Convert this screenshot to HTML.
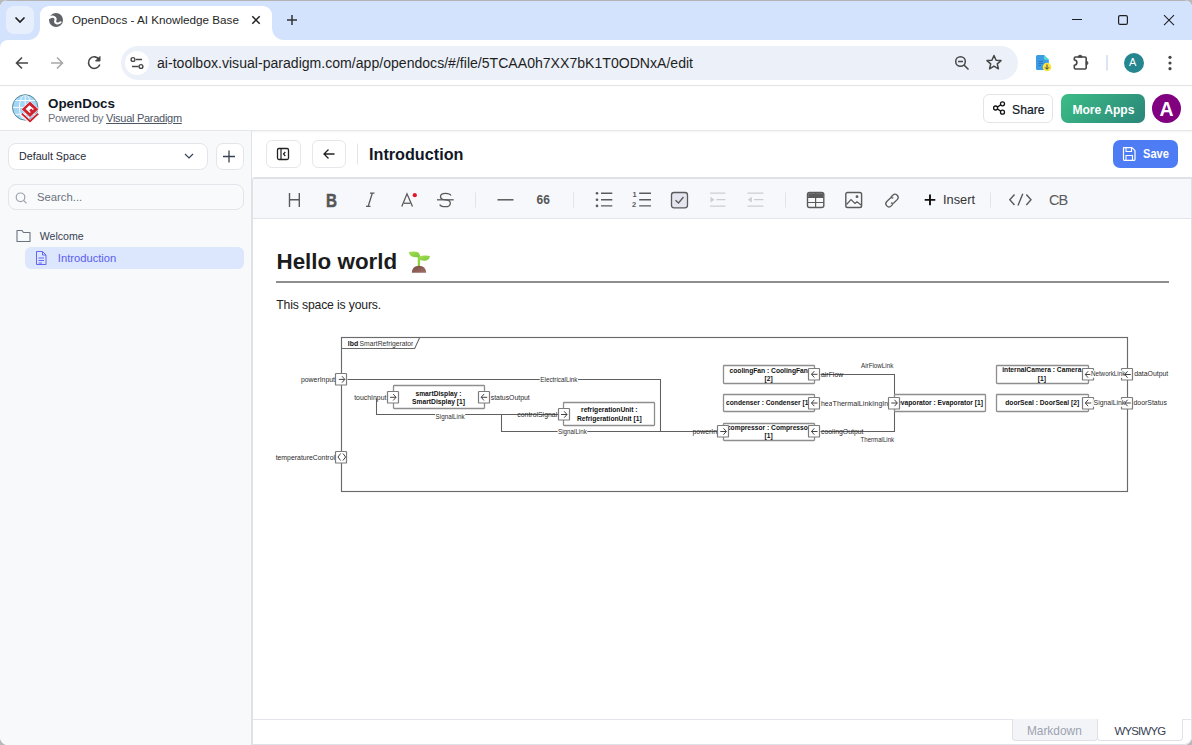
<!DOCTYPE html>
<html><head><meta charset="utf-8">
<style>
*{box-sizing:border-box;margin:0;padding:0}
html,body{width:1192px;height:745px;overflow:hidden;background:#b9b9b9;font-family:"Liberation Sans",sans-serif}
.abs{position:absolute}
#win{position:absolute;left:0;top:0;width:1192px;height:745px;background:#fff;border-radius:8px 8px 8px 8px;overflow:hidden}
#tabstrip{position:absolute;left:0;top:0;width:1192px;height:40px;background:#d3e3fd}
#toolbar{position:absolute;left:0;top:40px;width:1192px;height:46px;background:#fff;border-bottom:1px solid #e3e3e3}
.t{position:absolute;white-space:nowrap;line-height:1}
svg{position:absolute;overflow:visible}
</style></head>
<body>
<div id="win">
  <div id="tabstrip">
    <div class="abs" style="left:0;top:0;width:1192px;height:1px;background:#b4b4b4"></div>
    <div class="abs" style="left:28px;top:28px;width:256px;height:12px;background:#fff"></div>
    <div class="abs" style="left:16px;top:16px;width:24px;height:24px;background:#d3e3fd;border-radius:0 0 12px 0"></div>
    <div class="abs" style="left:272px;top:16px;width:24px;height:24px;background:#d3e3fd;border-radius:0 0 0 12px"></div>
    <div class="abs" style="left:40px;top:6px;width:232px;height:34px;background:#fff;border-radius:9px 9px 0 0"></div>
    <div class="abs" style="left:6px;top:6px;width:28px;height:28px;border-radius:8px;background:#e8effc"></div>
    <svg style="left:0;top:0" width="40" height="40"><path d="M15.5 17.5 L20 22 L24.5 17.5" fill="none" stroke="#1f1f1f" stroke-width="1.7"/></svg>
    <svg style="left:0;top:0" width="300" height="40">
      <circle cx="56" cy="20" r="7" fill="#5f6368"/>
      <path d="M49.8 17.8 Q52 15.8 54.3 17.2 Q56.3 18.6 55.3 20.6 Q54.5 22.4 56.5 23.2 Q58.5 24 60.5 22.3" fill="none" stroke="#fff" stroke-width="2.1" stroke-linecap="round"/>
      <path d="M252.3 16.3 L259.7 23.7 M259.7 16.3 L252.3 23.7" stroke="#1f1f1f" stroke-width="1.5"/>
      <path d="M287 20 H297 M292 15 V25" stroke="#333" stroke-width="1.5"/>
    </svg>
    <div class="t" style="left:72px;top:14px;font-size:11.7px;color:#1f1f1f">OpenDocs - AI Knowledge Base</div>
    <svg style="left:0;top:0" width="1192" height="40">
      <path d="M1072 19.5 H1082" stroke="#1f1f1f" stroke-width="1.1"/>
      <rect x="1118.6" y="15.6" width="8.8" height="8.8" rx="1.5" fill="none" stroke="#1f1f1f" stroke-width="1.2"/>
      <path d="M1164 15.2 L1174 25.2 M1174 15.2 L1164 25.2" stroke="#1f1f1f" stroke-width="1.05"/>
    </svg>
  </div>
  <div id="toolbar">
    <div class="abs" style="left:0;top:0;width:8px;height:8px;background:#d3e3fd"></div>
    <div class="abs" style="left:0;top:0;width:16px;height:16px;background:#fff;border-radius:8px 0 0 0"></div>
    <svg style="left:0;top:0" width="1192" height="46">
      <path d="M28 23 H16.5 M22 17.5 L16.5 23 L22 28.5" fill="none" stroke="#474747" stroke-width="1.6"/>
      <path d="M51 23 H62.5 M57 17.5 L62.5 23 L57 28.5" fill="none" stroke="#a8a8a8" stroke-width="1.6"/>
      <path d="M99.2 19.5 A5.8 5.8 0 1 0 99.8 24.5" fill="none" stroke="#474747" stroke-width="1.6"/>
      <path d="M100 16.5 V21 H95.5 Z" fill="#474747" stroke="#474747" stroke-width="1"/>
    </svg>
    <div class="abs" style="left:121px;top:6px;width:897px;height:34px;background:#ecf1f9;border-radius:17px"></div>
    <div class="abs" style="left:125px;top:11px;width:24px;height:24px;background:#fff;border-radius:12px"></div>
    <svg style="left:0;top:0" width="1192" height="46">
      <circle cx="133" cy="19.5" r="1.9" fill="none" stroke="#474747" stroke-width="1.4"/>
      <path d="M136 19.5 H142" stroke="#474747" stroke-width="1.4"/>
      <circle cx="141" cy="26.5" r="1.9" fill="none" stroke="#474747" stroke-width="1.4"/>
      <path d="M132 26.5 H138.5" stroke="#474747" stroke-width="1.4"/>
      <circle cx="960.5" cy="21.5" r="4.8" fill="none" stroke="#474747" stroke-width="1.5"/>
      <path d="M958 21.5 H963 M964 25 L968.5 29.5" stroke="#474747" stroke-width="1.5"/>
      <path d="M994 15.5 L996.1 20.2 L1001 20.6 L997.3 23.9 L998.4 28.8 L994 26.2 L989.6 28.8 L990.7 23.9 L987 20.6 L991.9 20.2 Z" fill="none" stroke="#474747" stroke-width="1.5" stroke-linejoin="round"/>
      <path d="M1037.5 15 H1044 L1048.8 19.8 V28.5 Q1048.8 30 1047.3 30 H1037.5 Q1036 30 1036 28.5 V16.5 Q1036 15 1037.5 15Z" fill="#3c9be6"/>
      <path d="M1044 15 L1048.8 19.8 H1045.2 Q1044 19.8 1044 18.6Z" fill="#4de0c6"/>
      <path d="M1038.5 21.5 H1043 M1038.5 23.5 H1043 M1038.5 25.5 H1041" stroke="#2a6fb5" stroke-width="0.9"/>
      <circle cx="1047" cy="27" r="4.3" fill="#fce43f"/>
      <path d="M1047 24.5 V29 M1045 27.3 L1047 29.3 L1049 27.3" fill="none" stroke="#3c4043" stroke-width="1"/>
      <path d="M1075.5 17 H1085 Q1086.2 17 1086.2 18.2 V27.8 Q1086.2 29 1085 29 H1075.5 Q1074.3 29 1074.3 27.8 V25.2 A2.6 2.6 0 0 0 1074.3 20 V18.2 Q1074.3 17 1075.5 17Z" fill="none" stroke="#474747" stroke-width="1.6" stroke-linejoin="round"/>
      <path d="M1078 17.2 A2.1 2.1 0 0 1 1082.2 17.2 Z" fill="#474747" stroke="#474747" stroke-width="0.6"/>
      <path d="M1086.2 21.2 A1.8 1.8 0 0 1 1086.2 24.8 Z" fill="#474747" stroke="#474747" stroke-width="0.8"/>
      <path d="M1107 15 V30.5" stroke="#c2d4f4" stroke-width="1.2"/>
      <circle cx="1134" cy="23" r="10" fill="#26868f"/>
      <circle cx="1170" cy="17.3" r="1.6" fill="#474747"/>
      <circle cx="1170" cy="23" r="1.6" fill="#474747"/>
      <circle cx="1170" cy="28.7" r="1.6" fill="#474747"/>
    </svg>
    <div class="t" style="left:1129px;top:17px;font-size:11px;color:#fff">A</div>
    <div class="t" style="left:157px;top:16px;font-size:14.08px;color:#1f1f1f">ai-toolbox.visual-paradigm.com/app/opendocs/#/file/5TCAA0h7XX7bK1T0ODNxA/edit</div>
  </div>
  <!-- app header -->
  <div class="abs" style="left:0;top:86px;width:1192px;height:45px;background:#fff;border-bottom:1px solid #e6e7eb;box-shadow:0 1px 2px rgba(0,0,0,0.05)"></div>
  <svg style="left:0;top:86px" width="60" height="45">
    <defs><clipPath id="gclip"><circle cx="25.2" cy="21.4" r="12.2"/></clipPath></defs>
    <circle cx="25.2" cy="21.4" r="12.7" fill="#a3d6f4" stroke="#5a8796" stroke-width="1"/>
    <g clip-path="url(#gclip)" stroke="#fff" stroke-width="1" fill="none" opacity="0.9">
      <path d="M12 14.5 H38 M12 21.4 H38 M12 28.3 H38"/>
      <ellipse cx="25.2" cy="21.4" rx="5.8" ry="12.5"/>
      <path d="M25.2 9 V34"/>
    </g>
    <path d="M21.5 27.8 L30 35.6 L38.5 27.8" fill="none" stroke="#fff" stroke-width="3.2"/>
    <path d="M21.8 27.6 L30 35.2 L38.2 27.6" fill="none" stroke="#d0212e" stroke-width="1.9"/>
    <path d="M30 15.2 L38.6 23.3 L30 31.4 L21.4 23.3 Z" fill="#d0212e" stroke="#fff" stroke-width="0.6"/>
    <path d="M29.4 19.2 L33.9 23.1 L29.9 26.9 L25.6 22.9 Z" fill="#fff"/>
    <path d="M31.2 22.6 L33.2 24.5 L31.2 26.4 L29.2 24.5 Z" fill="#d0212e"/>
  </svg>
  <div class="t" style="left:48px;top:96.5px;font-size:13.4px;font-weight:bold;color:#111827">OpenDocs</div>
  <div class="t" style="left:48px;top:112.6px;font-size:11px;letter-spacing:-0.28px;color:#6b7280">Powered by <span style="text-decoration:underline;color:#4b5563">Visual Paradigm</span></div>
  <div class="abs" style="left:982.5px;top:94px;width:70px;height:28.5px;border:1px solid #e3e4e8;border-radius:6px;background:#fff"></div>
  <svg style="left:0;top:0" width="1192" height="130">
    <circle cx="1002.5" cy="103.8" r="2" fill="none" stroke="#111" stroke-width="1.3"/>
    <circle cx="995.6" cy="108" r="2" fill="none" stroke="#111" stroke-width="1.3"/>
    <circle cx="1002.5" cy="112.2" r="2" fill="none" stroke="#111" stroke-width="1.3"/>
    <path d="M997.4 107 L1000.7 104.9 M997.4 109 L1000.7 111.1" stroke="#111" stroke-width="1.3"/>
  </svg>
  <div class="t" style="left:1012px;top:104px;font-size:12.2px;color:#111827;-webkit-text-stroke:0.2px #111827">Share</div>
  <div class="abs" style="left:1061px;top:94px;width:84px;height:28.5px;border-radius:7px;background:linear-gradient(135deg,#3cbd86,#2a8679)"></div>
  <div class="t" style="left:1072.4px;top:104px;font-size:12.1px;font-weight:bold;color:#fff">More Apps</div>
  <div class="abs" style="left:1152px;top:94px;width:29px;height:29px;border-radius:50%;background:#800080"></div>
  <div class="t" style="left:1159.5px;top:100px;font-size:19.5px;font-weight:bold;color:#fff">A</div>
  <!-- sidebar -->
  <div class="abs" style="left:0;top:131px;width:252px;height:614px;background:#f8f9fb;border-right:1px solid #e0e2e8"></div>
  <div class="abs" style="left:7.5px;top:143px;width:200px;height:27px;background:#fff;border:1px solid #e3e5ea;border-radius:8px"></div>
  <div class="t" style="left:19px;top:151px;font-size:10.7px;color:#1f2937">Default Space</div>
  <div class="abs" style="left:215.5px;top:143px;width:28px;height:27px;background:#fff;border:1px solid #e3e5ea;border-radius:7px"></div>
  <div class="abs" style="left:7.5px;top:184px;width:236px;height:26px;background:#f9fafb;border:1px solid #e3e5ea;border-radius:8px"></div>
  <div class="t" style="left:37px;top:192px;font-size:11.3px;color:#6b7280">Search...</div>
  <svg style="left:0;top:0" width="252" height="280">
    <path d="M185 154 L189 158 L193 154" fill="none" stroke="#374151" stroke-width="1.2"/>
    <path d="M229 150.5 V162.5 M223 156.5 H235" stroke="#374151" stroke-width="1.3"/>
    <circle cx="20.5" cy="197.3" r="4.3" fill="none" stroke="#9ca3af" stroke-width="1.2"/>
    <path d="M23.6 200.4 L26.5 203.3" stroke="#9ca3af" stroke-width="1.2"/>
    <path d="M17 230.5 H22 L23.5 232.5 H30 V241.5 H17 Z" fill="none" stroke="#6b7280" stroke-width="1.1" stroke-linejoin="round"/>
  </svg>
  <div class="t" style="left:39.7px;top:231px;font-size:10.6px;color:#374151">Welcome</div>
  <div class="abs" style="left:25px;top:247px;width:219px;height:22px;background:#dce6fd;border-radius:6px"></div>
  <svg style="left:0;top:0" width="252" height="280">
    <path d="M36.5 251.5 H42.5 L46 255 V264.5 H36.5 Z M42.5 251.5 V255 H46 M38.5 258 H44 M38.5 260.5 H44 M38.5 263 H42" fill="none" stroke="#6366f1" stroke-width="1" stroke-linejoin="round"/>
  </svg>
  <div class="t" style="left:57.8px;top:252.5px;font-size:11.2px;color:#5b5ff0">Introduction</div>
  <!-- editor -->
  <div class="abs" style="left:266px;top:140px;width:35px;height:28px;border:1px solid #e6e7ea;border-radius:6px;background:#fff"></div>
  <div class="abs" style="left:312px;top:140px;width:34px;height:28px;border:1px solid #e6e7ea;border-radius:6px;background:#fff"></div>
  <svg style="left:0;top:0" width="1192" height="230">
    <rect x="277.5" y="148.5" width="11" height="11" rx="1.5" fill="none" stroke="#222" stroke-width="1.3"/>
    <path d="M281 148.5 V159.5 M285.3 152 L283.5 154 L285.3 156" fill="none" stroke="#222" stroke-width="1.2"/>
    <path d="M334.5 154 H324 M328.5 149.5 L324 154 L328.5 158.5" fill="none" stroke="#222" stroke-width="1.3"/>
    <path d="M357.5 143.5 V164.5" stroke="#e2e4e8" stroke-width="1"/>
  </svg>
  <div class="t" style="left:369px;top:146px;font-size:16.2px;font-weight:bold;color:#111827">Introduction</div>
  <div class="abs" style="left:1113px;top:140px;width:65px;height:27.5px;border-radius:7px;background:#4e7cf5"></div>
  <svg style="left:0;top:0" width="1192" height="230">
    <path d="M1123.5 147.7 H1132 L1135 150.7 V159.5 Q1135 160.3 1134.2 160.3 H1124.3 Q1123.5 160.3 1123.5 159.5 Z" fill="none" stroke="#fff" stroke-width="1.2" stroke-linejoin="round"/>
    <path d="M1126 147.7 V151.5 H1131.5 V147.7 M1126 160.3 V155.5 H1132.5 V160.3" fill="none" stroke="#fff" stroke-width="1.1"/>
  </svg>
  <div class="t" style="left:1142.5px;top:148px;font-size:12.8px;font-weight:bold;color:#fff;transform:scaleX(0.87);transform-origin:0 0">Save</div>
  <div class="abs" style="left:252px;top:177px;width:940px;height:568px;border:1px solid #dfe1e7;border-top:2px solid #dfe1e7;border-radius:3px 0 8px 0;background:#fff"></div>
  <div class="abs" style="left:253px;top:179px;width:938px;height:40px;background:#f7f8fb;border-bottom:1px solid #e3e5ea"></div>
  <!-- toolbar icons -->
  <svg style="left:0;top:0" width="1192" height="230">
    <g stroke="#5a5a5a" fill="none" stroke-width="1.4">
      <path d="M289.5 193 V207 M299.3 193 V207 M289.5 199.8 H299.3"/>
      <path d="M366 206.3 H370.5 M370 193.2 H374.5 M372.3 193.2 L368.2 206.3" stroke-width="1.3"/>
      <path d="M401.8 206.5 L407 193.8 L412.5 206.5" stroke-width="1.3"/>
      <path d="M437 199.8 H453.7" stroke-width="1.3"/>
      <path d="M451 195.5 Q450 193.3 445.5 193.3 Q440.5 193.3 440.5 196.6 Q440.5 199.8 445.5 199.8 Q450.3 199.8 450.3 203.2 Q450.3 206.7 445.3 206.7 Q440.5 206.7 439.8 204.5" stroke-width="1.3"/>
      <path d="M497.5 199.8 H513.5" stroke-width="1.5"/>
      <path d="M601 193.3 H612.3 M601 199.7 H612.3 M601 205.9 H612.3" stroke-width="1.4"/>
      <path d="M639.2 193.3 H651 M639.2 199.7 H651 M639.2 205.9 H651" stroke-width="1.4"/>
      <rect x="671.5" y="192.5" width="16" height="15.3" rx="2.5" fill="#e3e6ef" stroke-width="1.3"/>
      <path d="M675.5 200.2 L678.5 203 L683.5 197" stroke-width="1.3"/>
      <g stroke="#cbcdd2"><path d="M710 193.2 H725.5 M710 206.2 H725.5 M716.5 199.7 H725.5" stroke-width="1.3"/></g>
      <g stroke="#cbcdd2"><path d="M747.5 193.2 H763.5 M747.5 206.2 H763.5 M754 199.7 H763.5" stroke-width="1.3"/></g>
      <rect x="807.5" y="192.5" width="16.3" height="15" rx="2" stroke-width="1.4"/>
      <path d="M807.5 197.5 H823.8 M815.6 192.5 V207.5 M807.5 202.5 H823.8" stroke-width="1.2"/>
      <rect x="845.8" y="192.5" width="15.8" height="15" rx="1.8" stroke-width="1.4"/>
      <path d="M846.5 204.5 L851 199.5 L855 203.5 L857 201.7 L861 205" stroke-width="1.2"/>
      <path d="M890.8 197.2 L892.8 195.2 Q895 193 897.2 195.2 Q899.4 197.4 897.2 199.6 L894.3 202.5 Q892.6 204 891 202.7 M893.3 198.3 Q891.6 197 889.9 198.5 L886.8 201.5 Q884.6 203.7 886.8 205.9 Q889 208.1 891.2 205.9 L893 204.1" stroke-width="1.3"/>
      <path d="M1014.5 194.5 L1009.8 199.8 L1014.5 205 M1026.3 194.5 L1031 199.8 L1026.3 205 M1022.8 193.8 L1018 205.6" stroke-width="1.4"/>
    </g>
    <rect x="327.5" y="193" width="10.5" height="14" fill="none"/>
    <g fill="#5a5a5a">
      <path d="M404 202.6 H410.5 V203.9 H404Z"/>
      <circle cx="597" cy="193.3" r="1.3"/><circle cx="597" cy="199.7" r="1.3"/><circle cx="597" cy="205.9" r="1.3"/>
    </g>
    <g fill="#cbcdd2">
      <path d="M710.5 196.8 L714.5 199.7 L710.5 202.6Z"/>
      <path d="M751.8 196.8 L747.8 199.7 L751.8 202.6Z"/>
    </g>
    <path d="M808.2 193.2 H823 V197.5 H808.2Z" fill="#5a5a5a"/>
    <circle cx="857" cy="196.7" r="1.4" fill="#5a5a5a"/>
    <circle cx="414.8" cy="195.2" r="2.1" fill="#e5142a"/>
    <path d="M930 194.6 V205.2 M924.7 199.9 H935.3" stroke="#111" stroke-width="1.9"/>
    <path d="M573.5 192.5 V207.5 M785.5 192.5 V207.5 M990.5 192.5 V207.5 M475.5 192.5 V207.5" stroke="#e2e4e9" stroke-width="1"/>
  </svg>
  <div class="t" style="left:326.3px;top:190.7px;font-size:19px;font-weight:bold;color:#555;transform:scaleX(0.8);transform-origin:0 0;-webkit-text-stroke:0.5px #555">B</div>
  <div class="t" style="left:536.5px;top:194.2px;font-size:12px;font-weight:bold;color:#555">66</div>
  <div class="t" style="left:632.5px;top:191px;font-size:7.5px;font-weight:bold;color:#5a5a5a">1</div>
  <div class="t" style="left:632px;top:201px;font-size:7.5px;font-weight:bold;color:#5a5a5a">2</div>
  <div class="t" style="left:943px;top:193.5px;font-size:12.8px;color:#333">Insert</div>
  <div class="t" style="left:1049px;top:192.5px;font-size:14.5px;color:#5a5a5a;letter-spacing:-1px">CB</div>
  <!-- content -->
  <div class="t" style="left:276.5px;top:251px;font-size:22.4px;font-weight:bold;color:#1c1c1c">Hello world</div>
  <svg style="left:0;top:0" width="1192" height="300">
    <defs>
      <linearGradient id="leaf" x1="0" y1="0" x2="1" y2="1"><stop offset="0" stop-color="#a9e052"/><stop offset="1" stop-color="#79c73c"/></linearGradient>
      <linearGradient id="soil" x1="0" y1="0" x2="1" y2="1"><stop offset="0" stop-color="#7a4a45"/><stop offset="1" stop-color="#a0706a"/></linearGradient>
    </defs>
    <path d="M418.9 256.5 V266.5" stroke="#8fd443" stroke-width="2.3"/>
    <path d="M408.8 252 Q413 250.8 417.5 252 Q420.5 253.5 419.8 257 Q414 257.8 411 256 Q409 254.5 408.8 252Z" fill="url(#leaf)"/>
    <path d="M418.3 258.5 Q419.5 255.5 424 255.5 Q428.5 255.3 430 256.2 Q429.5 259.5 426.5 260.5 Q421 261.5 418.3 258.5Z" fill="url(#leaf)"/>
    <path d="M411.8 272.8 Q412.2 266 419 265.8 Q425.8 266 426.2 272.8Z" fill="url(#soil)"/>
    <rect x="276" y="281" width="893" height="2" fill="#8e8e8e"/>
  </svg>
  <div class="t" style="left:276.3px;top:299px;font-size:12.2px;color:#222;letter-spacing:-0.15px">This space is yours.</div>
  <!-- diagram -->
  <svg style="left:0;top:0" width="1192" height="745" font-family="Liberation Sans, sans-serif">
    <rect x="341.5" y="337.5" width="786" height="154" fill="#fff" stroke="#6a6a6a" stroke-width="1.15"/>
    <path d="M341.5 348.5 H414.7 L419.7 337.5" fill="none" stroke="#6a6a6a" stroke-width="1.1"/>
    <path d="M347.5 379.5 L660.5 379.5 L660.5 431.5 L717.5 431.5" fill="none" stroke="#606060" stroke-width="1.05"/>
    <path d="M376.5 398.5 L376.5 414.5 L558.5 414.5" fill="none" stroke="#606060" stroke-width="1.05"/>
    <path d="M501.5 414.5 L501.5 431.5 L660.5 431.5" fill="none" stroke="#606060" stroke-width="1.05"/>
    <path d="M820.5 374.5 L894.5 374.5 L894.5 431.5 L820.5 431.5" fill="none" stroke="#606060" stroke-width="1.05"/>
    <rect x="393.5" y="385.5" width="91.0" height="23.0" rx="0.8" fill="#fff" stroke="#8e8e8e" stroke-width="1.3"/>
    <rect x="563.5" y="402.5" width="91.0" height="23.0" rx="0.8" fill="#fff" stroke="#8e8e8e" stroke-width="1.3"/>
    <rect x="723.5" y="365.5" width="91.0" height="18.0" rx="0.8" fill="#fff" stroke="#8e8e8e" stroke-width="1.3"/>
    <rect x="723.5" y="394.5" width="91.0" height="17.0" rx="0.8" fill="#fff" stroke="#8e8e8e" stroke-width="1.3"/>
    <rect x="723.5" y="423.5" width="91.0" height="17.0" rx="0.8" fill="#fff" stroke="#8e8e8e" stroke-width="1.3"/>
    <rect x="894.5" y="394.5" width="91.0" height="17.0" rx="0.8" fill="#fff" stroke="#8e8e8e" stroke-width="1.3"/>
    <rect x="996.5" y="365.5" width="92.0" height="18.0" rx="0.8" fill="#fff" stroke="#8e8e8e" stroke-width="1.3"/>
    <rect x="996.5" y="394.5" width="92.0" height="17.0" rx="0.8" fill="#fff" stroke="#8e8e8e" stroke-width="1.3"/>
    <text x="438.5" y="393.2" font-size="6.7" text-anchor="middle" font-weight="bold" fill="#111" dominant-baseline="central">smartDisplay :</text>
    <text x="438.5" y="401.6" font-size="6.7" text-anchor="middle" font-weight="bold" fill="#111" dominant-baseline="central">SmartDisplay [1]</text>
    <text x="609.3" y="409.9" font-size="6.7" text-anchor="middle" font-weight="bold" fill="#111" dominant-baseline="central">refrigerationUnit :</text>
    <text x="609.3" y="418.7" font-size="6.7" text-anchor="middle" font-weight="bold" fill="#111" dominant-baseline="central">RefrigerationUnit [1]</text>
    <text x="768.7" y="370" font-size="6.7" text-anchor="middle" font-weight="bold" fill="#111" dominant-baseline="central">coolingFan : CoolingFan</text>
    <text x="768.7" y="378.8" font-size="6.7" text-anchor="middle" font-weight="bold" fill="#111" dominant-baseline="central">[2]</text>
    <text x="726" y="402.7" font-size="6.7" text-anchor="start" font-weight="bold" fill="#111" dominant-baseline="central">condenser : Condenser [1]</text>
    <text x="768.7" y="427.8" font-size="6.7" text-anchor="middle" font-weight="bold" fill="#111" dominant-baseline="central">compressor : Compressor</text>
    <text x="768.7" y="435.6" font-size="6.7" text-anchor="middle" font-weight="bold" fill="#111" dominant-baseline="central">[1]</text>
    <text x="940" y="402.7" font-size="6.7" text-anchor="middle" font-weight="bold" fill="#111" dominant-baseline="central">evaporator : Evaporator [1]</text>
    <text x="1041.8" y="369.8" font-size="6.7" text-anchor="middle" font-weight="bold" fill="#111" dominant-baseline="central">internalCamera : Camera</text>
    <text x="1041.8" y="378.7" font-size="6.7" text-anchor="middle" font-weight="bold" fill="#111" dominant-baseline="central">[1]</text>
    <text x="1042.2" y="402.6" font-size="6.7" text-anchor="middle" font-weight="bold" fill="#111" dominant-baseline="central">doorSeal : DoorSeal [2]</text>
    <text x="347.8" y="343.7" font-size="6.9" text-anchor="start" font-weight="bold" fill="#111" dominant-baseline="central">lbd</text>
    <text x="359.6" y="343.7" font-size="6.77" text-anchor="start" fill="#333" dominant-baseline="central">SmartRefrigerator</text>
    <rect x="335.5" y="373.5" width="11" height="11.5" rx="0.6" fill="#fff" stroke="#7c7c7c" stroke-width="1.2"/>
    <path d="M338.8 379.4 H344.8 M342.0 376.2 L344.8 379.4 L342.0 382.59999999999997" fill="none" stroke="#3a3a3a" stroke-width="0.95"/>
    <rect x="335.5" y="451.5" width="11" height="11.5" rx="0.6" fill="#fff" stroke="#7c7c7c" stroke-width="1.2"/>
    <path d="M340.6 453.5 L338.0 457 L340.6 460.5 M343.0 453.5 L345.6 457 L343.0 460.5" fill="none" stroke="#3a3a3a" stroke-width="0.95"/>
    <rect x="387.5" y="391.5" width="11" height="11.5" rx="0.6" fill="#fff" stroke="#7c7c7c" stroke-width="1.2"/>
    <path d="M390 397.3 H396 M393.2 394.1 L396 397.3 L393.2 400.5" fill="none" stroke="#3a3a3a" stroke-width="0.95"/>
    <rect x="478.5" y="391.5" width="11" height="11.5" rx="0.6" fill="#fff" stroke="#7c7c7c" stroke-width="1.2"/>
    <path d="M487.2 397.3 H481.2 M484.0 394.1 L481.2 397.3 L484.0 400.5" fill="none" stroke="#3a3a3a" stroke-width="0.95"/>
    <rect x="558.5" y="408.5" width="11" height="11.5" rx="0.6" fill="#fff" stroke="#7c7c7c" stroke-width="1.2"/>
    <path d="M561 414.5 H567 M564.2 411.3 L567 414.5 L564.2 417.7" fill="none" stroke="#3a3a3a" stroke-width="0.95"/>
    <rect x="808.5" y="368.5" width="11" height="11.5" rx="0.6" fill="#fff" stroke="#7c7c7c" stroke-width="1.2"/>
    <path d="M817.5 374.3 H811.5 M814.3 371.1 L811.5 374.3 L814.3 377.5" fill="none" stroke="#3a3a3a" stroke-width="0.95"/>
    <rect x="808.5" y="397.5" width="11" height="11.5" rx="0.6" fill="#fff" stroke="#7c7c7c" stroke-width="1.2"/>
    <path d="M817.5 403 H811.5 M814.3 399.8 L811.5 403 L814.3 406.2" fill="none" stroke="#3a3a3a" stroke-width="0.95"/>
    <rect x="808.5" y="425.5" width="11" height="11.5" rx="0.6" fill="#fff" stroke="#7c7c7c" stroke-width="1.2"/>
    <path d="M817.5 431.5 H811.5 M814.3 428.3 L811.5 431.5 L814.3 434.7" fill="none" stroke="#3a3a3a" stroke-width="0.95"/>
    <rect x="717.5" y="425.5" width="11" height="11.5" rx="0.6" fill="#fff" stroke="#7c7c7c" stroke-width="1.2"/>
    <path d="M720.3 431.5 H726.3 M723.5 428.3 L726.3 431.5 L723.5 434.7" fill="none" stroke="#3a3a3a" stroke-width="0.95"/>
    <rect x="888.5" y="397.5" width="11" height="11.5" rx="0.6" fill="#fff" stroke="#7c7c7c" stroke-width="1.2"/>
    <path d="M891.3 403 H897.3 M894.5 399.8 L897.3 403 L894.5 406.2" fill="none" stroke="#3a3a3a" stroke-width="0.95"/>
    <rect x="1082.5" y="368.5" width="11" height="11.5" rx="0.6" fill="#fff" stroke="#7c7c7c" stroke-width="1.2"/>
    <path d="M1091.3 374.5 H1085.3 M1088.1 371.3 L1085.3 374.5 L1088.1 377.7" fill="none" stroke="#3a3a3a" stroke-width="0.95"/>
    <rect x="1082.5" y="397.5" width="11" height="11.5" rx="0.6" fill="#fff" stroke="#7c7c7c" stroke-width="1.2"/>
    <path d="M1091.3 403 H1085.3 M1088.1 399.8 L1085.3 403 L1088.1 406.2" fill="none" stroke="#3a3a3a" stroke-width="0.95"/>
    <text x="335" y="379.6" font-size="6.9" text-anchor="end" fill="#2a2a2a" dominant-baseline="central">powerInput</text>
    <text x="335" y="457.2" font-size="6.9" text-anchor="end" fill="#2a2a2a" dominant-baseline="central">temperatureControl</text>
    <text x="386.4" y="397.5" font-size="6.9" text-anchor="end" fill="#2a2a2a" dominant-baseline="central">touchInput</text>
    <text x="490.7" y="397.5" font-size="6.9" text-anchor="start" fill="#2a2a2a" dominant-baseline="central">statusOutput</text>
    <text x="557.2" y="414.7" font-size="6.9" text-anchor="end" fill="#2a2a2a" dominant-baseline="central">controlSignal</text>
    <text x="821" y="374.5" font-size="6.9" text-anchor="start" fill="#2a2a2a" dominant-baseline="central">airFlow</text>
    <text x="821" y="403.2" font-size="6.9" text-anchor="start" fill="#2a2a2a" dominant-baseline="central">heat</text>
    <text x="821" y="431.7" font-size="6.9" text-anchor="start" fill="#2a2a2a" dominant-baseline="central">coolingOutput</text>
    <text x="717" y="431.7" font-size="6.9" text-anchor="end" fill="#2a2a2a" dominant-baseline="central">powerIn</text>
    <text x="888" y="403.2" font-size="6.9" text-anchor="end" fill="#2a2a2a" dominant-baseline="central">coolingIn</text>
    <rect x="1121.5" y="368.5" width="11" height="11.5" rx="0.6" fill="#fff" stroke="#7c7c7c" stroke-width="1.2"/>
    <rect x="1121.5" y="397.5" width="11" height="11.5" rx="0.6" fill="#fff" stroke="#7c7c7c" stroke-width="1.2"/>
    <rect x="539.8" y="376.4" width="38.200000000000045" height="7.4" fill="#fff"/>
    <text x="540.3" y="382" font-size="6.9" textLength="37.200000000000045" lengthAdjust="spacingAndGlyphs" fill="#2e2e2e">ElectricalLink</text>
    <rect x="435.1" y="413.4" width="30.0" height="7.4" fill="#fff"/>
    <text x="435.6" y="419" font-size="6.9" textLength="29.0" lengthAdjust="spacingAndGlyphs" fill="#2e2e2e">SignalLink</text>
    <rect x="557.6" y="428.4" width="29.699999999999932" height="7.4" fill="#fff"/>
    <text x="558.1" y="434" font-size="6.9" textLength="28.699999999999932" lengthAdjust="spacingAndGlyphs" fill="#2e2e2e">SignalLink</text>
    <rect x="860.5" y="362.4" width="33.299999999999955" height="7.4" fill="#fff"/>
    <text x="861" y="368" font-size="6.9" textLength="32.299999999999955" lengthAdjust="spacingAndGlyphs" fill="#2e2e2e">AirFlowLink</text>
    <rect x="860.1" y="436.4" width="34.5" height="7.4" fill="#fff"/>
    <text x="860.6" y="442" font-size="6.9" textLength="33.5" lengthAdjust="spacingAndGlyphs" fill="#2e2e2e">ThermalLink</text>
    <rect x="832.0" y="399.9" width="40.5" height="7.4" fill="#fff"/>
    <text x="832.5" y="405.5" font-size="6.9" textLength="39.5" lengthAdjust="spacingAndGlyphs" fill="#2e2e2e">ThermalLink</text>
    <rect x="1090.4" y="370.4" width="35.399999999999864" height="7.4" fill="#fff"/>
    <text x="1090.9" y="376" font-size="6.9" textLength="34.399999999999864" lengthAdjust="spacingAndGlyphs" fill="#2e2e2e">NetworkLink</text>
    <rect x="1093.1" y="399.4" width="32.700000000000045" height="7.4" fill="#fff"/>
    <text x="1093.6" y="405" font-size="6.9" textLength="31.700000000000045" lengthAdjust="spacingAndGlyphs" fill="#2e2e2e">SignalLink</text>
    <path d="M1130.8 374.5 H1124.8 M1127.6 371.3 L1124.8 374.5 L1127.6 377.7" fill="none" stroke="#3a3a3a" stroke-width="0.95"/>
    <path d="M1130.8 403 H1124.8 M1127.6 399.8 L1124.8 403 L1127.6 406.2" fill="none" stroke="#3a3a3a" stroke-width="0.95"/>
    <text x="1134.2" y="373.6" font-size="6.9" text-anchor="start" fill="#2a2a2a" dominant-baseline="central">dataOutput</text>
    <text x="1133.5" y="402.6" font-size="6.9" text-anchor="start" fill="#2a2a2a" dominant-baseline="central">doorStatus</text>
  </svg>
  <!-- /diagram -->
  <!-- footer tabs -->
  <div class="abs" style="left:253px;top:719px;width:938px;height:1px;background:#e3e5ea"></div>
  <div class="abs" style="left:1011.5px;top:719px;width:86px;height:21.5px;background:#f3f4f8;border:1px solid #dfe1e7;border-top:none;border-radius:0 0 4px 4px"></div>
  <div class="abs" style="left:1097px;top:719px;width:86px;height:21.5px;background:#fff;border:1px solid #dfe1e7;border-top:none;border-radius:0 0 4px 4px"></div>
  <div class="t" style="left:1026.9px;top:726px;font-size:11.9px;color:#9ca3af">Markdown</div>
  <div class="t" style="left:1114.4px;top:726px;font-size:11.4px;color:#374151;letter-spacing:-0.75px">WYSIWYG</div>
</div>
</body></html>
